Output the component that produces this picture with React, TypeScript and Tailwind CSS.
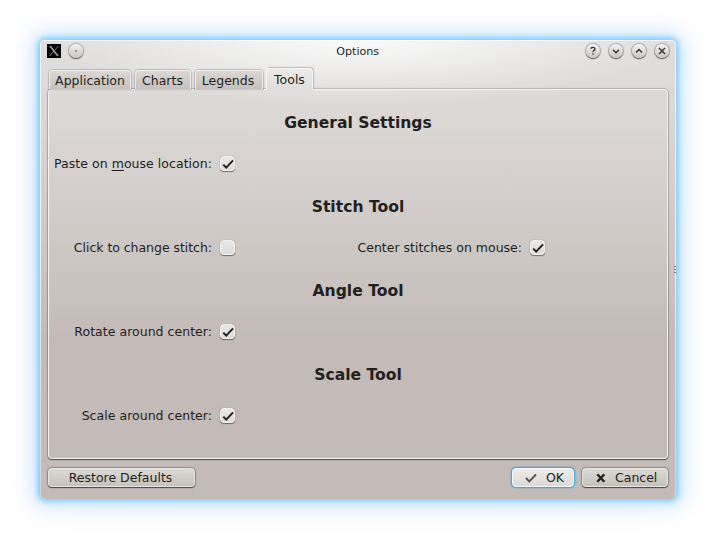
import React from "react";

function CheckBox({ checked = false }: { checked?: boolean }) {
  return (
    <span className="mb-px ml-2 flex h-[15px] w-[15px] shrink-0 items-center justify-center rounded-[4px] border border-[#f5f4f3] bg-linear-to-b from-[#e9e8e7] to-[#dedbd9] shadow-[0_1px_1px_#00000070,0_0_1px_#00000060]">
      {checked && (
        <svg width="14" height="14" viewBox="0 0 14 14" fill="none" className="shrink-0">
          <path d="M2.3 7.6 5.2 10.6 12 3.4" stroke="#231f20" strokeWidth="2" />
        </svg>
      )}
    </span>
  );
}

function Heading({ children }: { children: React.ReactNode }) {
  return (
    <h2 className="flex h-[42px] items-center justify-center pt-[2px] text-[15.6px] font-bold">{children}</h2>
  );
}

function Option({ width, label, checked, children }: { width: string; label?: string; checked?: boolean; children: React.ReactNode }) {
  return (
    <label className={`flex items-center ${width}`}>
      <span className={`flex-1 text-right ${label ?? ""}`}>{children}</span>
      <CheckBox checked={checked} />
    </label>
  );
}

function Row({ children }: { children: React.ReactNode }) {
  return <div className="flex h-[42px] items-center pl-[5px]">{children}</div>;
}

function TitleButton({ children }: { children?: React.ReactNode }) {
  return (
    <span className="flex h-[14px] w-[14px] items-center justify-center rounded-full bg-linear-to-b from-[#f4f4f3] to-[#c9c6c4] shadow-[0_1px_1px_#00000080,0_0_1px_1px_#00000040]">
      <svg width="14" height="14" viewBox="0 0 14 14" fill="none" stroke="#353233" strokeWidth="1.4">
        {children}
      </svg>
    </span>
  );
}

function Tab({ width, children }: { width: string; children: React.ReactNode }) {
  return (
    <div
      className={`mt-[3px] flex h-[19px] items-center justify-center rounded-t-[4px] border border-b-0 border-[#f0efee] bg-linear-to-b from-[#dad7d5] to-[#c7c1be] pt-[2px] shadow-[0_0_1px_1px_#00000030] ${width}`}
    >
      {children}
    </div>
  );
}

const button =
  "flex h-[19px] items-center rounded-[4px] border border-[#e7e5e2] bg-linear-to-b from-[#dcd9d6] to-[#c6c2bb] shadow-[0_1px_1px_#00000080,0_0_1px_1px_#00000040]";

export default function App() {
  return (
    <div className="h-[539px] w-[716px] overflow-hidden bg-white p-10 font-['DejaVu_Sans',sans-serif] text-[12.5px] leading-[16px] whitespace-nowrap text-[#231f20]">
      <div className="relative flex h-[459px] w-[636px] flex-col rounded-[5px] bg-[radial-gradient(ellipse_310px_64px_at_50%_0px,#fafafa_0%,#fafafa00_100%),linear-gradient(to_bottom,#e0dfde_0px,#dad6d3_90px,#d0cbc8_182px,#c4bbb8_298px,#c4bab7_320px)] shadow-[0_0_5px_2px_#7accf7,0_0_16px_5px_#9bd5ff90,0_0_28px_8px_#c8ddff60]">
        <div className="pointer-events-none absolute inset-0 rounded-[5px] border border-b-0 border-white/70 mask-linear-[to_bottom,black_50%,#0008]" />
        <header className="flex h-[22px] items-center px-2">
          <svg width="14" height="14" viewBox="0 0 14 14" className="mr-[8px] ml-[-1px]">
            <rect width="14" height="14" fill="#000" />
            <path d="M3 2 11 12" stroke="#999" strokeWidth="1.8" />
            <path d="M11.5 2 2.5 12" stroke="#999" strokeWidth=".8" />
          </svg>
          <TitleButton>
            <circle cx="7" cy="7" r=".8" fill="#353233" stroke="none" />
          </TitleButton>
          <div className="flex-1 pt-px pl-[47px] text-center text-[11.1px]">Options</div>
          <div className="mr-[-0.5px] flex gap-[9px]">
            <TitleButton>
              <path d="M5 4.8V4.3Q5.2 3.4 7 3.4T9 5Q9 6 7.9 6.6T7 8M7 9.3V10.6" />
            </TitleButton>
            <TitleButton>
              <path d="M4 5.8 7 8.8 10 5.8" />
            </TitleButton>
            <TitleButton>
              <path d="M4 8.5 7 5.5 10 8.5" />
            </TitleButton>
            <TitleButton>
              <path d="M4 4 10 10M10 4 4 10" />
            </TitleButton>
          </div>
        </header>
        <nav className="z-10 mt-[5px] ml-2 flex h-[23px] gap-[4px] pl-px">
          <Tab width="w-[82px]">Application</Tab>
          <Tab width="w-[56px] pr-px">Charts</Tab>
          <Tab width="w-[68px] pr-[2px]">Legends</Tab>
          <div className="mt-px ml-[-1px] flex h-[22px] w-[47px] items-center justify-center rounded-t-[4px] border border-b-0 border-[#f8f8f8] bg-linear-to-b from-[#ecebea] to-[#dfdddc] shadow-[1px_-1px_1px_#00000035]">
            Tools
          </div>
        </nav>
        <main className="mx-2 mt-[-1px] h-[370px] rounded-[4px] border border-[#f4f3f2] pt-[11px] shadow-[0_1px_1px_#00000080,0_0_1px_1px_#00000030]">
          <Heading>General Settings</Heading>
          <Row>
            <Option width="w-[181px]" label="tracking-[0.04px]" checked>
              Paste on <span className="underline underline-offset-2">m</span>ouse location:
            </Option>
          </Row>
          <Heading>Stitch Tool</Heading>
          <Row>
            <Option width="w-[181px]" label="tracking-[-0.04px]">Click to change stitch:</Option>
            <Option width="w-[310px]" checked>
              Center stitches on mouse:
            </Option>
          </Row>
          <Heading>Angle Tool</Heading>
          <Row>
            <Option width="w-[181px]" label="tracking-[0.03px]" checked>
              Rotate around center:
            </Option>
          </Row>
          <Heading>Scale Tool</Heading>
          <Row>
            <Option width="w-[181px]" label="tracking-[0.03px]" checked>
              Scale around center:
            </Option>
          </Row>
        </main>
        <footer className="mt-[9px] flex px-2">
          <button className={`${button} w-[147px] justify-center pr-[2px]`}>Restore Defaults</button>
          <button className="ml-auto flex h-[19px] w-[62px] items-center rounded-[4px] border border-[#f8f8f8] bg-linear-to-b from-[#edecea] to-[#dcdad7] pl-[12px] shadow-[0_0_0_1px_#43a8dc,0_0_2px_1px_#43a8dc]">
            <svg width="12" height="12" viewBox="0 0 12 12" fill="none" className="mr-[9px]">
              <path d="M1 6 4.3 9.4 11 2.5" stroke="#535150" strokeWidth="1.8" />
            </svg>
            OK
          </button>
          <button className={`${button} ml-[8px] w-[86px] pl-[13px]`}>
            <svg width="10" height="10" viewBox="0 0 10 10" className="mr-[9px]">
              <path d="M1.3 1.3 8.3 8.7M8.3 1.3 1.3 8.7" stroke="#231f20" strokeWidth="2.4" />
            </svg>
            Cancel
          </button>
        </footer>
        <div className="absolute top-[226px] right-0 flex flex-col gap-[2px]">
          <i className="h-px w-[2px] bg-[#777]" />
          <i className="h-px w-[2px] bg-[#777]" />
          <i className="h-px w-[2px] bg-[#777]" />
        </div>
      </div>
    </div>
  );
}
